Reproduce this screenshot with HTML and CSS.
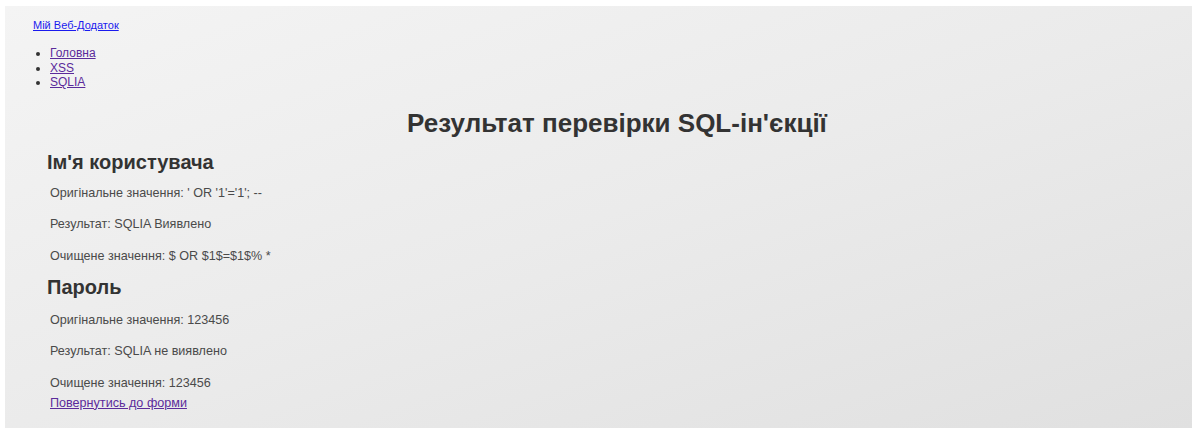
FILE: index.html
```html
<!DOCTYPE html>
<html lang="uk">
<head>
<meta charset="utf-8">
<title>Результат перевірки SQL-ін'єкції</title>
<link rel="stylesheet" href="styles.css">
</head>
<body>
<div class="page">
  <header class="site-header">
    <a class="brand" href="#">Мій Веб-Додаток</a>
    <ul class="menu">
      <li><a class="visited" href="#">Головна</a></li>
      <li><a class="visited" href="#">XSS</a></li>
      <li><a class="visited" href="#">SQLIA</a></li>
    </ul>
  </header>
  <main class="result">
    <h1 class="title">Результат перевірки SQL-ін'єкції</h1>
    <section class="field">
      <h2 class="field-name">Ім'я користувача</h2>
      <p class="line">Оригінальне значення: ' OR '1'='1'; --</p>
      <p class="line">Результат: SQLIA Виявлено</p>
      <p class="line">Очищене значення: $ OR $1$=$1$% *</p>
    </section>
    <section class="field">
      <h2 class="field-name">Пароль</h2>
      <p class="line">Оригінальне значення: 123456</p>
      <p class="line">Результат: SQLIA не виявлено</p>
      <p class="line">Очищене значення: 123456</p>
    </section>
    <a class="back visited" href="#">Повернутись до форми</a>
  </main>
</div>
</body>
</html>
```
FILE: styles.css
```css
html, body {
  margin: 0;
  background: #ffffff;
}

body {
  font-family: "Liberation Sans", Arial, sans-serif;
  font-size: 12px;
  color: #4a4a4a;
}

.page {
  margin: 6px 0 0 5px;
  min-height: 422px;
  box-sizing: border-box;
  padding: 12px 0 0 28px;
  background: linear-gradient(to bottom right, #f4f4f4 0%, #ebebeb 50%, #e0e0e0 100%);
}

a {
  color: #1a1aee;
}

a.visited {
  color: #5b2b9b;
}

.site-header {
  display: flex;
  flex-direction: column;
}

.brand {
  font-size: 11px;
  line-height: 14px;
  align-self: flex-start;
}

.menu {
  margin: 14px 0 0;
  padding-left: 17px;
  line-height: 14.5px;
  color: #333;
}

.result {
  padding: 0 0 0 14px;
}

.title {
  margin: 18px 0 0;
  padding-right: 5px;
  font-size: 26px;
  line-height: 30px;
  color: #333;
  text-align: center;
}

.field-name {
  margin: 13px 0 0;
  font-size: 20px;
  line-height: 23px;
  color: #333;
}

.line {
  margin: 12px 0 0 3px;
  font-size: 12.6px;
  line-height: 14px;
}

.line + .line {
  margin-top: 17.5px;
}

.field + .field .field-name {
  margin-top: 13px;
}

.field + .field .line:first-of-type {
  margin-top: 14px;
}

.back {
  display: inline-block;
  margin: 6px 0 0 3px;
  font-size: 12.6px;
  line-height: 14px;
}
```
